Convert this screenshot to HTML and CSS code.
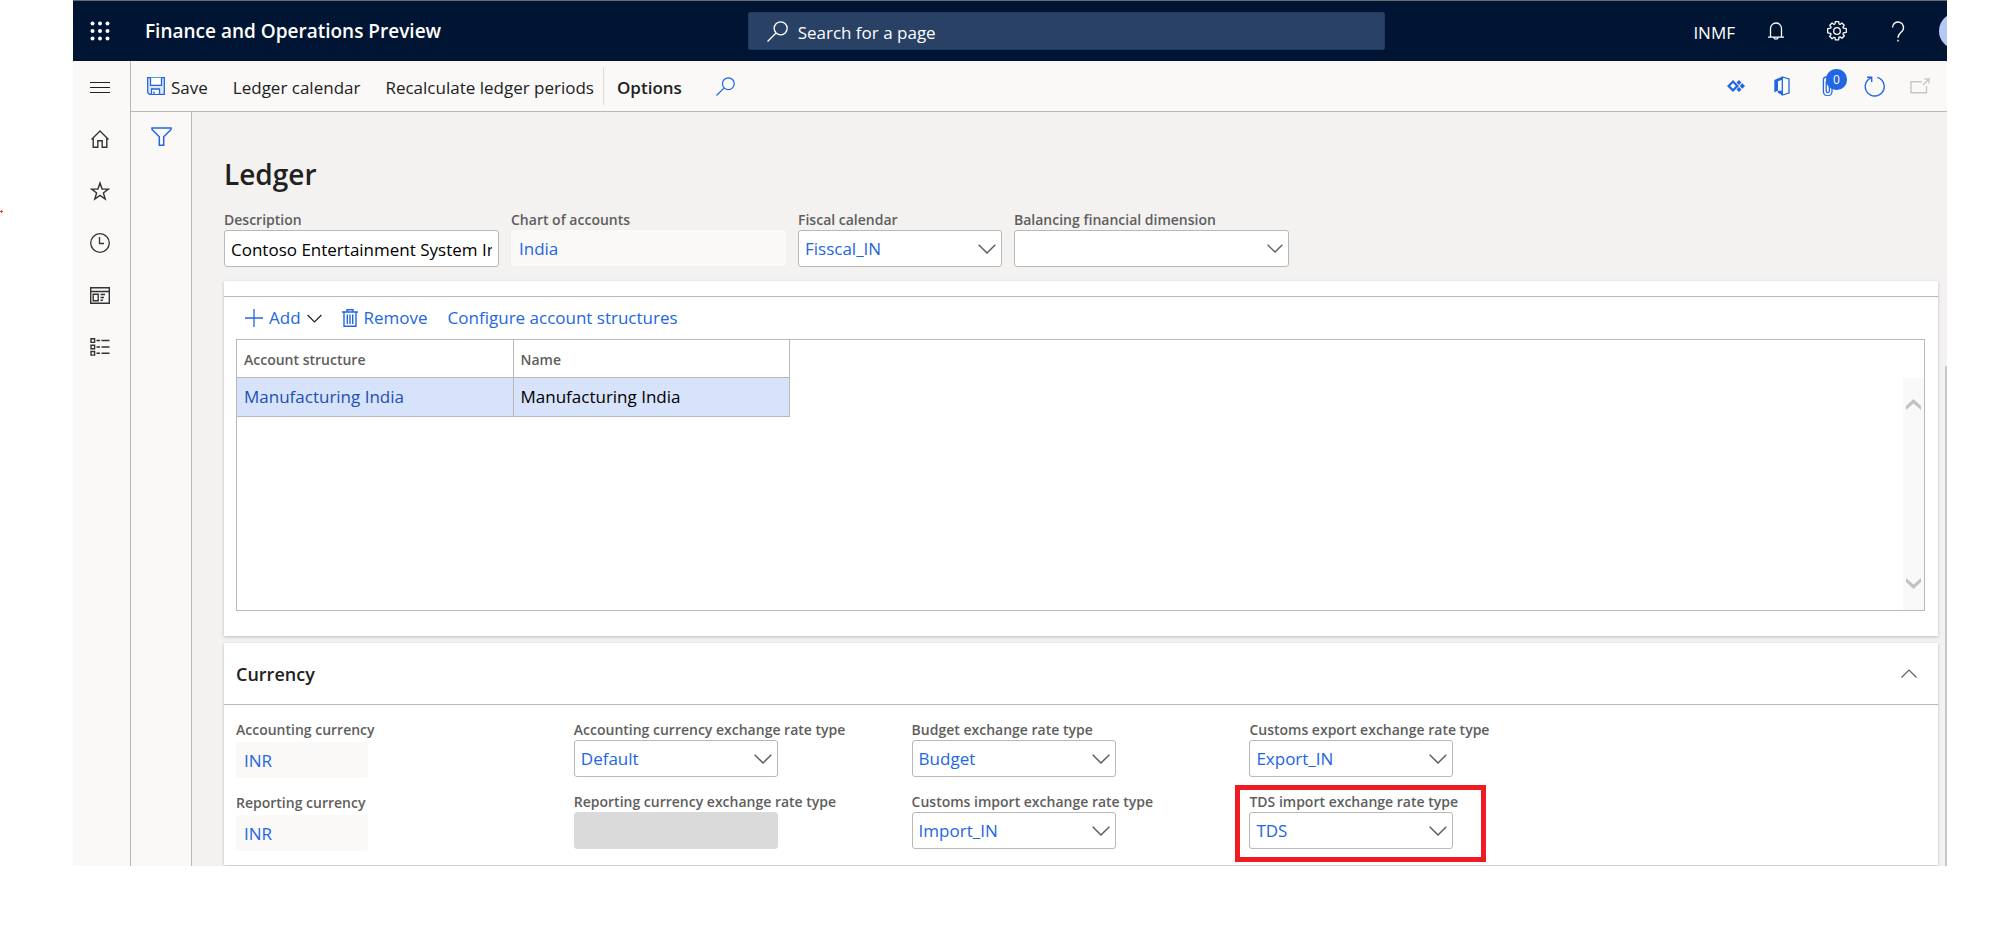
FILE: index.html
```html
<!DOCTYPE html>
<html lang="en">
<head>
<meta charset="utf-8">
<title>Ledger - Finance and Operations Preview</title>
<meta name="viewport" content="width=device-width, initial-scale=1">
<link rel="stylesheet" href="styles.css">
</head>
<body>
<svg class="mark" width="3" height="3" viewBox="0 0 3 3" aria-hidden="true"><path d="M0 1.500h3M1.500 0v3" stroke="#f33" stroke-width="1"/></svg>

<svg width="0" height="0" class="sprite" aria-hidden="true">
  <symbol id="chevron" viewBox="0 0 18 10"><path d="M.7.8 9 9 17.300.8" fill="none" stroke="currentColor" stroke-width="1.500"/></symbol>
  <symbol id="magnifier" viewBox="0 0 20 20"><circle cx="13" cy="7" r="6.200" fill="none" stroke="currentColor" stroke-width="1.300"/><path d="M8.600 11.400.5 19.500" stroke="currentColor" stroke-width="1.300"/></symbol>
</svg>

<div class="app">
  <header class="topbar">
    <div class="brand">
      <button class="waffle" type="button" aria-label="App launcher">
        <svg width="20" height="20" viewBox="0 0 20 20" fill="#fff"><circle cx="2.500" cy="2.500" r="2"/><circle cx="10" cy="2.500" r="2"/><circle cx="17.500" cy="2.500" r="2"/><circle cx="2.500" cy="10" r="2"/><circle cx="10" cy="10" r="2"/><circle cx="17.500" cy="10" r="2"/><circle cx="2.500" cy="17.500" r="2"/><circle cx="10" cy="17.500" r="2"/><circle cx="17.500" cy="17.500" r="2"/></svg>
      </button>
      <span class="brand-name">Finance and Operations Preview</span>
    </div>
    <label class="search">
      <svg width="21" height="21"><use href="#magnifier"/></svg>
      <input type="search" placeholder="Search for a page" aria-label="Search for a page">
    </label>
    <div class="account">
      <button class="company" type="button">INMF</button>
      <button class="top-icon" type="button" aria-label="Notifications">
        <svg width="16" height="19" viewBox="0 0 16 19" fill="none" stroke="#fff" stroke-width="1.300"><path d="M2.500 15V6.500a5.500 5.500 0 0 1 11 0V15M0 15.200h16M5.800 15.500a2.300 2.300 0 0 0 4.400 0"/></svg>
      </button>
      <button class="top-icon" type="button" aria-label="Settings">
        <svg width="20" height="20" viewBox="0 0 20 20" fill="none" stroke="#fff" stroke-width="1.300" stroke-linejoin="round"><path d="M8 3 8.300.7h3.400L12 3l1 .4 1.900-1.400 2.300 2.300L15.900 6.100l.5 1.100 2.900.5v3.600l-2.900.5-.5 1.100 1.500 1.900-2.500 2.500-1.900-1.500-1 .4-.4 2.600H8.400L8 16.700l-1-.4-1.900 1.500-2.500-2.500 1.500-1.900-.5-1.100-2.900-.5V7.700l2.900-.5.500-1.100L2.800 4.300 5.100 2 7 3.400Z"/><circle cx="10" cy="10" r="3.300"/></svg>
      </button>
      <button class="top-icon" type="button" aria-label="Help">
        <svg width="14" height="21" viewBox="0 0 14 21" fill="none" stroke="#fff" stroke-width="1.400"><path d="M1.500 6.500a5.500 5.500 0 1 1 9.400 3.900C8.700 12.500 7 13.500 7 16.800M7 18.700v1.700"/></svg>
      </button>
      <span class="avatar"></span>
    </div>
  </header>

  <div class="body">
    <nav class="rail" aria-label="Navigation">
      <button type="button" aria-label="Expand"><svg width="20" height="12" viewBox="0 0 20 12" stroke="#212121"><path d="M0 1.500h20M0 6.500h20M0 11.500h20"/></svg></button>
      <button type="button" aria-label="Home"><svg width="20" height="20" viewBox="0 0 20 20" fill="none" stroke="#333" stroke-width="1.400"><path d="M1.500 10.500 10 2l8.500 8.500M3.200 9v9.300h4.600v-6.500h4.400v6.500h4.600V9"/></svg></button>
      <button type="button" aria-label="Favorites"><svg width="20" height="20" viewBox="0 0 20 20" fill="none" stroke="#333" stroke-width="1.400"><path d="m10 2 2.100 6.100h6.300l-5 3.900 1.800 6.100-5.200-3.700-5.200 3.700L6.600 12l-5-3.900h6.300Z"/></svg></button>
      <button type="button" aria-label="Recent"><svg width="20" height="20" viewBox="0 0 20 20" fill="none" stroke="#333" stroke-width="1.300"><circle cx="10" cy="10" r="9.300"/><path d="M9.500 4v6.500H14"/></svg></button>
      <button type="button" aria-label="Workspaces"><svg width="20" height="17" viewBox="0 0 20 17" fill="none" stroke="#333" stroke-width="1.400"><path d="M.7.700h18.600v15.600H.7ZM.7 4.500h18.600M3.200 7.200h5v6.600h-5ZM10.500 7.500h4.500M10.500 10.500h3.500M10.500 13.300H13"/></svg></button>
      <button type="button" aria-label="Modules"><svg width="20" height="18" viewBox="0 0 20 18" fill="none" stroke="#333" stroke-width="1.400"><path d="M1 .8h3.600v3.600H1ZM1 7.200h3.600v3.600H1ZM1 13.500h3.600v3.600H1ZM6.500 2.500H10M11.500 2.500h8M6.500 9H10M11.500 9h8M6.500 15.300H10M11.500 15.300h8"/></svg></button>
    </nav>

    <div class="workspace">
      <div class="actions">
        <button type="button" class="action action-save">
          <svg width="18" height="18" viewBox="0 0 18 18" fill="#dfe9fc" stroke="#2266e3" stroke-width="1.300"><path d="M.7.700h16.600v16.600H2.500L.7 15.500Z"/><path d="M3.500.7v7.600h11V.7" fill="#fff"/><path d="M4.500 17v-5h8v5M7 17v-2.500" fill="#fff"/></svg>
          Save
        </button>
        <button type="button" class="action">Ledger calendar</button>
        <button type="button" class="action">Recalculate ledger periods</button>
        <button type="button" class="action action-tab">Options</button>
        <button type="button" class="action action-find" aria-label="Search actions"><svg width="19" height="19"><use href="#magnifier"/></svg></button>
        <div class="tools">
          <button type="button" aria-label="Power Apps"><svg width="18" height="12" viewBox="0 0 18 12" fill="#2266e3"><path fill-rule="evenodd" d="M6 0 0 6l6 6 6-6ZM6 3 3.200 6 6 8.800 8.800 6Z"/><path d="m12 0 2.500 2.500L12 5 9.500 2.500ZM12 7l2.500 2.500L12 12 9.500 9.500ZM15.300 3.300 18 6l-2.700 2.700L12.600 6Z"/></svg></button>
          <button type="button" aria-label="Open in Office"><svg width="16" height="20" viewBox="0 0 16 20"><path d="m.3 4 8-3.500V3.800L4 5.300v9.500L.3 16.200ZM3 16l5.500-1v4.500Z" fill="#2266e3"/><path d="M8.300 1 15 3v14l-6.700 2V1ZM4 15.300h4.300" fill="none" stroke="#2266e3" stroke-width="1.300"/></svg></button>
          <button type="button" class="attach" aria-label="Attachments"><svg width="12" height="20" viewBox="0 0 12 20" fill="none" stroke="#2266e3" stroke-width="1.300"><path d="M10 3v12.500a4.200 4.200 0 0 1-8.600 0V4a3 3 0 0 1 6 0v11a1.600 1.600 0 0 1-3.200 0V5"/></svg><span class="badge">0</span></button>
          <button type="button" aria-label="Refresh"><svg width="21" height="21" viewBox="0 0 21 21" fill="none" stroke="#2266e3" stroke-width="1.400"><path d="M13.300 1.400A9.500 9.500 0 1 1 7 1.800M3 1.200h4.700v4.700"/></svg></button>
          <button type="button" aria-label="Open in new window" disabled><svg width="20" height="16" viewBox="0 0 20 16" fill="none" stroke="#c6c6c6" stroke-width="1.400"><path d="M12 3.700H1v11h15.500V8M13 7l6-6M14.500 1H19v4.500"/></svg></button>
        </div>
      </div>

      <div class="content">
        <aside class="filter-pane">
          <button type="button" aria-label="Show filters"><svg width="21" height="19" viewBox="0 0 21 19" fill="none" stroke="#2266e3" stroke-width="1.500"><path d="M1 1h19v1.500L12.700 9.800v8.400H8.300V9.800L1 2.500Z"/></svg></button>
        </aside>

        <main class="main">
          <h1>Ledger</h1>
          <div class="header-fields">
            <div class="field field-wide">
              <label for="description">Description</label>
              <input class="box" id="description" type="text" value="Contoso Entertainment System Inc.">
            </div>
            <div class="field field-wide">
              <span class="label">Chart of accounts</span>
              <a class="readonly" href="#chart">India</a>
            </div>
            <div class="field">
              <label for="fiscal">Fiscal calendar</label>
              <div class="combo"><select class="box" id="fiscal"><option>Fisscal_IN</option></select><svg width="18" height="10"><use href="#chevron"/></svg></div>
            </div>
            <div class="field field-wide">
              <label for="balancing">Balancing financial dimension</label>
              <div class="combo"><select class="box" id="balancing"><option></option></select><svg width="16" height="9"><use href="#chevron"/></svg></div>
            </div>
          </div>

          <section class="panel structures">
            <div class="panel-edge"></div>
            <div class="grid-actions">
              <button type="button"><svg width="18" height="18" viewBox="0 0 18 18" stroke="#2266e3" stroke-width="1.300"><path d="M9 0v18M0 9h18"/></svg>Add<svg class="dark" width="15" height="9"><use href="#chevron"/></svg></button>
              <button type="button"><svg width="16" height="18" viewBox="0 0 16 18" fill="none" stroke="#2266e3" stroke-width="1.400"><path d="M0 3h16M5 3V.8h6V3M2 3v14.200h12V3M5.300 5.500v9.500M8 5.500v9.500M10.700 5.500v9.500"/></svg>Remove</button>
              <button type="button">Configure account structures</button>
            </div>
            <div class="grid">
              <table>
                <thead><tr><th scope="col">Account structure</th><th scope="col">Name</th></tr></thead>
                <tbody><tr><td><a href="#structure">Manufacturing India</a></td><td>Manufacturing India</td></tr></tbody>
              </table>
              <div class="grid-scroll" aria-hidden="true">
                <svg width="15" height="11" viewBox="0 0 15 11" fill="#c2c2c2"><path d="M0 7 7.500 0 15 7v4L7.500 4.500 0 11Z"/></svg>
                <svg width="15" height="11" viewBox="0 0 15 11" fill="#c2c2c2"><path d="M0 4 7.500 11 15 4V0L7.500 6.500 0 0Z"/></svg>
              </div>
            </div>
          </section>

          <section class="panel">
            <div class="panel-head">
              <h2>Currency</h2>
              <button type="button" aria-label="Collapse"><svg width="16" height="9" viewBox="0 0 16 9" fill="none" stroke="#605e5c" stroke-width="1.200"><path d="M.5 8.500 8 1l7.500 7.500"/></svg></button>
            </div>
            <div class="currency">
              <div class="column column-short">
                <div class="field"><span class="label">Accounting currency</span><a class="readonly" href="#accounting">INR</a></div>
                <div class="field"><span class="label">Reporting currency</span><a class="readonly" href="#reporting">INR</a></div>
              </div>
              <div class="column">
                <div class="field"><label for="acc-rate">Accounting currency exchange rate type</label><div class="combo"><select class="box" id="acc-rate"><option>Default</option></select><svg width="18" height="10"><use href="#chevron"/></svg></div></div>
                <div class="field"><label for="rep-rate">Reporting currency exchange rate type</label><input class="box" id="rep-rate" type="text" disabled></div>
              </div>
              <div class="column">
                <div class="field"><label for="budget">Budget exchange rate type</label><div class="combo"><select class="box" id="budget"><option>Budget</option></select><svg width="18" height="10"><use href="#chevron"/></svg></div></div>
                <div class="field"><label for="import">Customs import exchange rate type</label><div class="combo"><select class="box" id="import"><option>Import_IN</option></select><svg width="18" height="10"><use href="#chevron"/></svg></div></div>
              </div>
              <div class="column">
                <div class="field"><label for="export">Customs export exchange rate type</label><div class="combo"><select class="box" id="export"><option>Export_IN</option></select><svg width="18" height="10"><use href="#chevron"/></svg></div></div>
                <div class="field highlighted"><label for="tds">TDS import exchange rate type</label><div class="combo"><select class="box" id="tds"><option>TDS</option></select><svg width="18" height="10"><use href="#chevron"/></svg></div></div>
              </div>
            </div>
          </section>
          <div class="page-scroll" aria-hidden="true"></div>
        </main>
      </div>
    </div>
  </div>
</div>
</body>
</html>
```

FILE: styles.css
```css
:root {
  --blue: #2266e3;
  --ink: #212121;
  --label: #605e5c;
  --line: #bab8b7;
  --surface: #faf9f8;
}

*, *::after { box-sizing: border-box; }

body {
  margin: 0;
  background: #fff;
  color: var(--ink);
  font: 17px/24px "Open Sans", "Noto Sans", sans-serif;
}

button {
  display: flex;
  align-items: center;
  justify-content: center;
  padding: 0;
  border: 0;
  background: none;
  color: inherit;
  font: inherit;
  white-space: nowrap;
}

svg { display: block; flex: none; }
a { color: var(--blue); text-decoration: none; }
h1, h2 { margin: 0; font-weight: 600; }

.sprite { position: absolute; }
.mark { position: absolute; left: 0; top: 210px; }

.app { margin: 0 49px 0 73px; overflow: hidden; }

/* Top bar */
.topbar {
  display: grid;
  grid-template-columns: 36% 34% 1fr;
  align-items: center;
  height: 61px;
  border-top: 1px solid #6b6b6b;
  background: #001433;
  color: #fff;
}
.brand { display: flex; align-items: center; gap: 18px; }
.waffle { width: 54px; height: 60px; }
.brand-name { font-size: 19px; font-weight: 600; white-space: nowrap; }
.search {
  display: flex;
  align-items: center;
  gap: 10px;
  height: 38px;
  padding-left: 18px;
  border: 1px solid #213a63;
  border-radius: 2px;
  background: #284164;
}
.search input {
  flex: 1;
  min-width: 0;
  padding: 4px 0 0;
  border: 0;
  outline: 0;
  background: none;
  color: #fff;
  font: inherit;
}
.search input::placeholder { color: #fff; opacity: 1; }
.account { display: flex; align-items: center; justify-content: flex-end; overflow: hidden; }
.company { margin-right: 10px; padding-top: 4px; }
.top-icon { width: 61px; height: 60px; }
.avatar {
  flex: none;
  width: 36px;
  height: 36px;
  margin: 0 -28px 0 11px;
  border-radius: 50%;
  background: #b5c9f7;
}

/* Frame */
.body { display: flex; }
.rail {
  flex: none;
  width: 58px;
  border-right: 1px solid var(--line);
  background: var(--surface);
}
.rail button { width: 54px; height: 52px; }
.workspace { flex: 1; min-width: 0; }
.actions {
  display: flex;
  align-items: center;
  height: 51px;
  padding-left: 16px;
  border-bottom: 1px solid var(--line);
  background: var(--surface);
}
.action { height: 38px; margin-right: 25px; padding-top: 3px; }
.action-save { gap: 6px; }
.action svg { margin-bottom: 3px; }
.action-tab {
  margin: 0 34px 0 -16px;
  padding-left: 13px;
  border-left: 1px solid #dddbda;
  font-weight: 600;
}
.action-find { color: var(--blue); margin: 0; }
.tools { display: flex; margin-left: auto; padding-right: 4px; }
.tools button { width: 46px; height: 50px; }
.attach { position: relative; }
.badge {
  position: absolute;
  top: 8px;
  left: 21px;
  width: 21px;
  height: 21px;
  border-radius: 10px;
  background: var(--blue);
  color: #fff;
  font-size: 12px;
  line-height: 21px;
  text-align: center;
}

.content { display: flex; }
.filter-pane {
  flex: none;
  width: 61px;
  border-right: 1px solid var(--line);
  background: var(--surface);
}
.filter-pane button { width: 60px; height: 49px; }

.main {
  position: relative;
  flex: 1;
  min-width: 0;
  padding: 42px 9px 1px 32px;
  background: #f3f2f1;
}
.page-scroll {
  position: absolute;
  top: 254px;
  right: 0;
  bottom: 0;
  width: 2px;
  background: #c8c8c8;
}

h1 { font-size: 28px; line-height: 40px; }

/* Fields */
.header-fields { display: flex; gap: 12px; padding: 16px 0 14px; }
.field { display: flex; flex-direction: column; width: 204px; }
.field-wide { width: 275px; }
.field label,
.label {
  color: var(--label);
  font-size: 14px;
  font-weight: 600;
  line-height: 20px;
  white-space: nowrap;
}
.box {
  width: 100%;
  height: 37px;
  padding: 1px 6px 0;
  border: 1px solid var(--line);
  border-radius: 3px;
  background: #fff;
  color: #000;
  font: inherit;
  appearance: none;
}
.box:disabled { border-color: #dadada; background: #dadada; }
.combo { display: grid; align-items: center; }
.combo > * { grid-area: 1 / 1; }
.combo .box { color: var(--blue); }
.combo svg { justify-self: end; margin-right: 6px; color: var(--label); pointer-events: none; }
.readonly {
  height: 36px;
  padding: 0 8px;
  border-radius: 3px;
  background: var(--surface);
  line-height: 37px;
}

/* Panels */
.panel { background: #fff; box-shadow: 0 1px 3px #00000038; }
.structures { margin-bottom: 7px; padding-bottom: 25px; }
.panel-edge { height: 16px; border-bottom: 1px solid var(--line); }
.grid-actions {
  display: flex;
  align-items: center;
  gap: 20px;
  height: 42px;
  padding-left: 21px;
  color: var(--blue);
}
.grid-actions button { gap: 6px; }
.dark { color: var(--ink); }

.grid {
  display: flex;
  justify-content: space-between;
  min-height: 272px;
  margin: 0 13px 0 12px;
  border: 1px solid var(--line);
}
table { align-self: flex-start; width: 553px; border-collapse: separate; border-spacing: 0; table-layout: fixed; }
th, td {
  height: 39px;
  padding: 0 7px;
  border-right: 1px solid var(--line);
  border-bottom: 1px solid var(--line);
  text-align: left;
}
th { height: 38px; padding-top: 2px; color: var(--label); font-size: 14px; font-weight: 600; }
td { background: #d7e3fb; color: #000; }
td a { color: #1c4fb4; }
.grid-scroll {
  display: flex;
  flex-direction: column;
  align-items: center;
  justify-content: space-between;
  width: 21px;
  margin-top: 38px;
  padding: 21px 0;
  background: #f9f9f9;
}

.panel-head {
  display: flex;
  align-items: center;
  justify-content: space-between;
  height: 62px;
  padding: 0 21px 0 12px;
  border-bottom: 1px solid var(--line);
}
h2 { font-size: 18px; line-height: 28px; }
.currency {
  display: grid;
  grid-template-columns: repeat(5, 1fr);
  padding: 15px 13px 14px 12px;
}
.column { display: flex; flex-direction: column; gap: 15px; }
.column-short .field { width: 132px; gap: 2px; }
.highlighted { position: relative; }
.highlighted::after {
  content: "";
  position: absolute;
  top: -7px;
  left: -14px;
  width: 251px;
  height: 77px;
  border: 5px solid #ed1c24;
  pointer-events: none;
}
```
